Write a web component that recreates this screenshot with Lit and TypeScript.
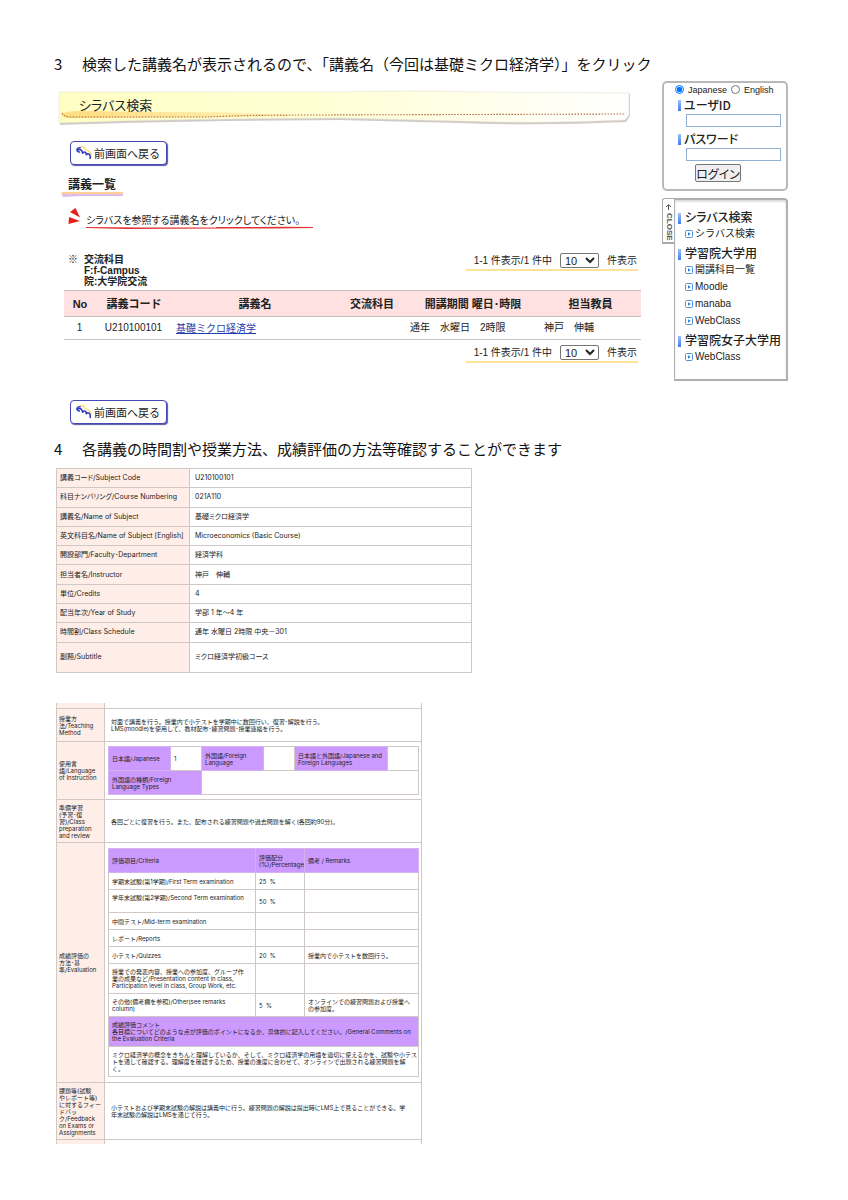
import { LitElement, html, css, nothing } from "lit";
import { customElement, property } from "lit/decorators.js";

const lines = (text: string) =>
  text.split("\n").map((part, i) => (i ? html`<br />${part}` : part));

@customElement("back-button")
class BackButton extends LitElement {
  static styles = css`
    :host { display: block; }
    button {
      display: flex; align-items: center; gap: 2px;
      height: 24px; padding: 0 6px 0 5px; box-sizing: border-box;
      border: 1px solid #4647b5; border-radius: 4px; background: #fff;
      box-shadow: 1px 1px 1px #5556a8;
      font: 11px/16px "Noto Sans CJK JP", sans-serif; color: #222; white-space: nowrap;
    }
    svg { display: block; width: 16px; height: 16px; }
  `;
  render() {
    return html`<button type="button">
      <svg viewBox="0 0 16 16" fill="none" stroke-linecap="round" stroke-linejoin="round">
        <path d="M3 2.500C5 .800 7.500 1.500 8.500 3.500S11 5 12.500 6S15.300 8 15 10" stroke="#ffdf80" stroke-width="1.600"></path>
        <path d="M4.200 2.800C2.500 2.800 1 3.800 1 5C1 6.200 2.300 6.800 3.400 7" stroke="#2f45c8" stroke-width="1.600"></path>
        <path d="M1.300 5C3.500 3.800 6.300 4.300 6.600 8.300C7.800 6.300 10 6.300 10.400 9.800C11.800 7.800 14.800 8.500 14.200 13.500" stroke="#2f35c0" stroke-width="1.500"></path>
      </svg>
      前画面へ戻る
    </button>`;
  }
}

@customElement("pager-bar")
class PagerBar extends LitElement {
  static styles = css`
    :host { display: block; }
    .bar {
      display: flex; align-items: center; justify-content: flex-end; gap: 8px;
      width: 172px; height: 19px; padding: 0 1px 0 0; box-sizing: border-box;
      border-bottom: 2px solid #ffe299;
      font: 10px/14px "Liberation Sans", "Noto Sans CJK JP", sans-serif; color: #222; white-space: nowrap;
    }
    select {
      width: 39px; height: 15px; padding: 0; margin: 0;
      border: 1px solid #767676; border-radius: 2px; background: #fff;
      font: 11px/13px "Liberation Sans", sans-serif; color: #222;
    }
  `;
  render() {
    return html`<div class="bar">
      <span>1-1 件表示/1 件中</span>
      <select aria-label="件表示"><option>10</option></select>
      <span>件表示</span>
    </div>`;
  }
}

@customElement("lecture-list")
class LectureList extends LitElement {
  static styles = css`
    :host { display: block; font: 10px/14px "Liberation Sans", "Noto Sans CJK JP", sans-serif; color: #222; }
    .banner { display: grid; margin: 8px 10px 0 4px; height: 37px; }
    .banner > * { grid-area: 1 / 1; }
    .banner svg { width: 100%; height: 37px; display: block; }
    .banner h2 {
      margin: 0; padding: 7px 0 0 21px; align-self: start;
      font: 13px/18px "Noto Sans CJK JP", sans-serif; font-feature-settings: "palt"; color: #222;
    }
    .inner { padding-left: 10px; }
    .back { display: flex; margin: 15px 0 0 6px; }
    .title {
      display: inline-block; margin: 10px 0 0 -3px; padding: 0 7px; height: 18px;
      font: bold 12px/18px "Noto Sans CJK JP", sans-serif;
    }
    .stroke { display: block; width: 62px; height: 6px; margin: -2px 0 0 -3px; }
    .note { display: flex; margin: 11px 0 0 4px; gap: 4px; align-items: flex-start; }
    .note > svg { width: 14px; height: 18px; }
    .note p { margin: 0; padding-top: 5px; font: 10px/13px "Noto Sans CJK JP", sans-serif; font-feature-settings: "palt"; }
    .note p svg { display: block; width: 228px; height: 4px; }
    .info { display: flex; justify-content: space-between; align-items: flex-start; margin: 22px 3px 0 4px; }
    .legend { display: flex; gap: 6px; padding-top: 2px; font: bold 10px/11px "Liberation Sans", "Noto Sans CJK JP", sans-serif; }
    table { width: 100%; border-collapse: collapse; table-layout: fixed; }
    .list { margin-top: 3px; }
    th { height: 25px; padding: 0; background: #ffe1e1; border: solid #c9bcbc; border-width: 1px 0; font: bold 11px/14px "Liberation Sans", "Noto Sans CJK JP", sans-serif; white-space: nowrap; }
    td { height: 22px; padding: 0 5px 0 4px; border-bottom: 1px solid #c9c4c4; white-space: nowrap; }
    .no { width: 32px; text-align: center; }
    .code { width: 76px; text-align: center; }
    .name { width: 166px; }
    .exchange { width: 68px; }
    .term { width: 134px; }
    a { color: #1f3fae; font: 10px/14px "Noto Sans CJK JP", sans-serif; }
    .bottom { display: flex; justify-content: flex-end; margin: 4px 3px 0 0; }
    .last { margin-top: 37px; }
  `;
  render() {
    return html`
      <div class="banner">
        <svg viewBox="0 0 572 37" preserveAspectRatio="none" aria-hidden="true">
          <defs>
            <linearGradient id="paper"><stop offset="0" stop-color="#ffffc4"></stop><stop offset=".45" stop-color="#ffffd4"></stop><stop offset="1" stop-color="#fff"></stop></linearGradient>
            <linearGradient id="brush"><stop offset="0" stop-color="#ffdd80"></stop><stop offset="1" stop-color="#fff4bc"></stop></linearGradient>
          </defs>
          <path d="M1 4L280 4Q345 0 420 4L571 5V27L567 33Q480 37 400 34L280 31Q100 32 2 36Z" fill="#cfcac6"></path>
          <path d="M1 3L280 3Q345 1 420 3L570 4V26L566 31Q480 35 400 32L280 29Q100 30 1 34Z" fill="url(#paper)" stroke="#e6e2d4" stroke-width=".6"></path>
          <path d="M4 25Q10 21 40 22T130 23T240 27Q100 29 10 29Q3 28 4 25Z" fill="url(#brush)"></path>
          <path d="M4 24Q6 28 12 28H150Q190 26 250 26L566 25" fill="none" stroke="#b0683c" stroke-width="1.100" stroke-dasharray="1.500 1.500"></path>
        </svg>
        <h2>シラバス検索</h2>
      </div>
      <div class="inner">
        <div class="back"><back-button></back-button></div>
        <h3 class="title">講義一覧</h3>
        <svg class="stroke" viewBox="0 0 62 6" preserveAspectRatio="none" aria-hidden="true">
          <path d="M0 2L62 1V5L20 5L2 6Z" fill="#dfbdea"></path>
          <path d="M1 1H62V3L1 3Z" fill="#ffcf96"></path>
        </svg>
        <div class="note">
          <svg viewBox="0 0 14 18" fill="#e8201c" aria-hidden="true">
            <path d="M2 4L7.500 0L12 9.500Z"></path>
            <path d="M1 9L12 13L.500 16Z"></path>
          </svg>
          <p>シラバスを参照する講義名をクリックしてください。
            <svg viewBox="0 0 228 4" aria-hidden="true"><path d="M0 1L60 1.500H128L129 2L130 1L200 .800L227 1V2L190 2.500L140 2.500L40 3L0 2Z" fill="#e03434"></path></svg>
          </p>
        </div>
        <div class="info">
          <div class="legend"><span>※</span><span>交流科目<br />F:f-Campus<br />院:大学院交流</span></div>
          <pager-bar></pager-bar>
        </div>
        <table class="list">
          <thead>
            <tr>
              <th class="no">No</th><th class="code">講義コード</th><th class="name">講義名</th>
              <th class="exchange">交流科目</th><th class="term">開講期間 曜日･時限</th><th>担当教員</th>
            </tr>
          </thead>
          <tbody>
            <tr>
              <td class="no">1</td><td class="code">U210100101</td>
              <td><a href="#subject">基礎ミクロ経済学</a></td><td></td>
              <td>通年　水曜日　2時限</td><td>神戸　伸輔</td>
            </tr>
          </tbody>
        </table>
        <div class="bottom"><pager-bar></pager-bar></div>
        <div class="back last"><back-button></back-button></div>
      </div>
    `;
  }
}

const MENU = [
  { title: "シラバス検索", items: ["シラバス検索"] },
  { title: "学習院大学用", items: ["開講科目一覧", "Moodle", "manaba", "WebClass"] },
  { title: "学習院女子大学用", items: ["WebClass"] },
];

@customElement("side-bar")
class SideBar extends LitElement {
  static styles = css`
    :host { display: block; width: 126px; color: #222; font: 10px/14px "Liberation Sans", "Noto Sans CJK JP", sans-serif; }
    form {
      height: 110px; box-sizing: border-box; padding: 0 6px 0 11px;
      border: 2px solid #b8b8b8; border-radius: 5px; background: #fff;
    }
    .lang { display: flex; gap: 4px; height: 13px; align-items: center; }
    .lang label { display: flex; align-items: center; gap: 4px; font-size: 9px; }
    input[type="radio"] { width: 9px; height: 9px; margin: 0; }
    .field, h3 {
      display: block; margin: 0; padding-left: 8px; white-space: nowrap;
      font: 500 12px/16px "Noto Sans CJK JP", sans-serif; font-feature-settings: "palt";
      background: linear-gradient(to bottom, #9cc0ff, #3f7ce8) 3px 4px / 3px 11px no-repeat;
    }
    .field { padding: 1px 0 0 9px; }
    .box {
      display: block; width: 95px; height: 13px; box-sizing: border-box; margin: 1px 0 3px 11px;
      border: 1px solid #8fb0d2; padding: 0 2px; background: #fff; font-size: 10px;
    }
    .login {
      display: block; width: 46px; height: 18px; margin: 3px 0 0 20px; padding: 0;
      border: 1px solid #777; border-radius: 2px; background: #efefef; color: #222;
      font: 12px/15px "Noto Sans CJK JP", sans-serif; font-feature-settings: "palt"; white-space: nowrap;
    }
    .panel { display: flex; align-items: flex-start; margin-top: 7px; }
    .tab {
      display: flex; flex-direction: column; align-items: center; gap: 3px;
      width: 12px; height: 46px; box-sizing: border-box; padding: 5px 0 0;
      border: 1px solid #aaa; border-right: 0; border-bottom-width: 2px; border-radius: 3px 0 0 0; background: #fff;
      color: #555; font: bold 8px/10px "Liberation Sans", sans-serif;
    }
    .tab svg { width: 7px; height: 6px; }
    .tab span { writing-mode: vertical-rl; }
    nav {
      flex: 1; min-width: 0; height: 183px; box-sizing: border-box; padding: 9px 0 0 2px;
      border: solid #b0b0b0; border-width: 2px 2px 2px 1px; border-radius: 0 4px 0 0;
      box-shadow: inset 0 2px 2px #ddd;
    }
    ul { list-style: none; margin: 0; padding: 0; }
    ul + h3 { margin-top: 3px; }
    h3 { background-position: 1px 4px; }
    li { display: flex; height: 17px; align-items: center; padding-left: 8px; }
    li a { display: flex; align-items: center; gap: 2px; color: #222; text-decoration: none; font: 10px/16px "Liberation Sans", "Noto Sans CJK JP", sans-serif; white-space: nowrap; }
    li svg { width: 8px; height: 8px; }
  `;
  render() {
    return html`
      <form>
        <div class="lang">
          <label><input type="radio" name="lang" checked />Japanese</label>
          <label><input type="radio" name="lang" />English</label>
        </div>
        <label class="field" for="user">ユーザID</label>
        <input class="box" id="user" type="text" />
        <label class="field" for="pass">パスワード</label>
        <input class="box" id="pass" type="password" />
        <button class="login" type="button">ログイン</button>
      </form>
      <div class="panel">
        <button class="tab" type="button">
          <svg viewBox="0 0 7 6" fill="none" stroke="#555"><path d="M3.500 6V1M1 3L3.500 .700L6 3"></path></svg>
          <span>CLOSE</span>
        </button>
        <nav>
          ${MENU.map((group) => html`<h3>${group.title}</h3>
            <ul>
              ${group.items.map((item) => html`<li><a href="#menu">
                <svg viewBox="0 0 8 8"><rect x=".5" y=".5" width="7" height="7" rx="1" fill="#fff" stroke="#4c94dc"></rect><path d="M3 2.200L5.800 4L3 5.800Z" fill="#2f7fd2"></path></svg>${item}</a></li>`)}
            </ul>`)}
        </nav>
      </div>
    `;
  }
}

const SUBJECT = [
  ["講義コード/Subject Code", "U210100101"],
  ["科目ナンバリング/Course Numbering", "021A110"],
  ["講義名/Name of Subject", "基礎ミクロ経済学"],
  ["英文科目名/Name of Subject [English]", "Microeconomics (Basic Course)"],
  ["開設部門/Faculty･Department", "経済学科"],
  ["担当者名/Instructor", "神戸　伸輔"],
  ["単位/Credits", "4"],
  ["配当年次/Year of Study", "学部 1 年～4 年"],
  ["時間割/Class Schedule", "通年 水曜日 2時限 中央－301"],
  ["副題/Subtitle", "ミクロ経済学初級コース"],
];

const CRITERIA = [
  ["学期末試験(第1学期)/First Term examination", "25  %", "", "short"],
  ["学年末試験(第2学期)/Second Term examination\n ", "50  %", "", "tall"],
  ["中間テスト/Mid-term examination", "", "", "short"],
  ["レポート/Reports", "", "", "short"],
  ["小テスト/Quizzes", "20  %", "授業内で小テストを数回行う。", "short"],
  ["授業での発表内容、授業への参加度、グループ作\n業の成果など/Presentation content in class,\nParticipation level in class, Group Work, etc.", "", "", "triple"],
  ["その他(備考欄を参照)/Other(see remarks\ncolumn)", "5  %", "オンラインでの練習問題および授業へ\nの参加度。", "tall"],
];

@customElement("syllabus-detail")
class SyllabusDetail extends LitElement {
  static styles = css`
    :host {
      display: block; color: #222; padding-left: 2px;
      font: 7px/8px Inter, "Noto Sans CJK JP", sans-serif;
    }
    table { border-collapse: collapse; table-layout: fixed; }
    th, td { padding: 0 0 0 3px; text-align: left; font-weight: normal; white-space: pre; vertical-align: middle; border: 1px solid #cfc8c4; }
    .subject { width: 416px; height: 205px; border: 1px solid #a39b97; }
    .subject tr { height: 19px; }
    .subject tr:last-child { height: 30px; }
    .subject th { width: 129px; background: #ffeee8; font-feature-settings: "palt"; }
    .subject td { padding-left: 5px; font-feature-settings: "palt"; }
    .detail { width: 366px; margin-top: 30px; border: solid #a39b97; border-width: 0 1px; font-size: 6px; line-height: 7px; }
    .detail > tbody > tr > th { width: 45px; padding-left: 2px; background: #ffeee8; }
    .detail > tbody > tr > td { padding-left: 6px; }
    .detail > tbody > tr > td.nest { padding: 0 0 0 3px; white-space: normal; }
    .detail > tbody > .edge > * { height: 5px; border-top: 0; }
    .detail > tbody > .edge.end > * { height: 4px; border-top: 1px solid #cfc8c4; border-bottom: 0; }
    .method > * { height: 32px; }
    .language > * { height: 57px; }
    .review > * { height: 42px; }
    .evaluation > * { height: 239px; }
    .feedback > * { height: 56px; }
    .nested { width: 311px; }
    .nested th { background: #cc99ff; }
    .half > * { height: 23px; }
    .half > th, .head > th { border-color: #d3b2ee; }
    .head > * { height: 23px; }
    .short > * { height: 16px; }
    .tall > * { height: 22px; }
    .triple > * { height: 29px; }
    .label { width: 62px; }
    .blank { width: 31px; }
    .wide { width: 93px; }
    .criteria { width: 143px; }
    .percent { width: 45px; }
  `;
  render() {
    return html`
      <table class="subject" id="subject">
        <tbody>
          ${SUBJECT.map(([label, value]) => html`<tr><th scope="row">${label}</th><td>${value}</td></tr>`)}
        </tbody>
      </table>
      <table class="detail">
        <tbody>
          <tr class="edge"><th></th><td></td></tr>
          <tr class="method">
            <th scope="row">${lines("授業方\n法/Teaching\nMethod")}</th>
            <td>${lines("対面で講義を行う。授業内で小テストを学期中に数回行い、復習･解説を行う。\nLMS(moodle)を使用して、教材配布･練習問題･授業連絡を行う。")}</td>
          </tr>
          <tr class="language">
            <th scope="row">${lines("使用言\n語/Language\nof Instruction")}</th>
            <td class="nest">
              <table class="nested">
                <colgroup><col class="label" /><col class="blank" /><col class="label" /><col class="blank" /><col class="wide" /><col /></colgroup>
                <tbody>
                  <tr class="half">
                    <th>日本語/Japanese</th><td>1</td>
                    <th>${lines("外国語/Foreign\nLanguage")}</th><td></td>
                    <th>${lines("日本語と外国語/Japanese and\nForeign Languages")}</th><td></td>
                  </tr>
                  <tr class="half">
                    <th colspan="2">${lines("外国語の種類/Foreign\nLanguage Types")}</th><td colspan="4"></td>
                  </tr>
                </tbody>
              </table>
            </td>
          </tr>
          <tr class="review">
            <th scope="row">${lines("準備学習\n(予習･復\n習)/Class\npreparation\nand review")}</th>
            <td>各回ごとに復習を行う。また、配布される練習問題や過去問題を解く(各回約90分)。</td>
          </tr>
          <tr class="evaluation">
            <th scope="row">${lines("成績評価の\n方法･基\n準/Evaluation")}</th>
            <td class="nest">
              <table class="nested">
                <thead>
                  <tr class="head">
                    <th class="criteria">評価項目/Criteria</th>
                    <th class="percent">${lines("評価配分\n(%)/Percentage")}</th>
                    <th>備考 / Remarks</th>
                  </tr>
                </thead>
                <tbody>
                  ${CRITERIA.map(([name, share, note, size]) => html`<tr class=${size}><td>${lines(name)}</td><td>${share}</td><td>${note ? lines(note) : nothing}</td></tr>`)}
                  <tr class="triple"><th colspan="3">${lines("成績評価コメント\n各目標についてどのような点が評価のポイントになるか、具体的に記入してください。/General Comments on\nthe Evaluation Criteria")}</th></tr>
                  <tr class="triple"><td colspan="3">${lines("ミクロ経済学の概念をきちんと理解しているか、そして、ミクロ経済学の用語を適切に使えるかを、試験や小テス\nトを通して確認する。理解度を確認するため、授業の進度に合わせて、オンラインで出題される練習問題を解\nく。")}</td></tr>
                </tbody>
              </table>
            </td>
          </tr>
          <tr class="feedback">
            <th scope="row">${lines("課題等(試験\nやレポート等)\nに対するフィー\nドバッ\nク/Feedback\non Exams or\nAssignments")}</th>
            <td>${lines("小テストおよび学期末試験の解説は講義中に行う。練習問題の解説は提出時にLMS上で見ることができる。学\n年末試験の解説はLMSを通じて行う。")}</td>
          </tr>
          <tr class="edge end"><th></th><td></td></tr>
        </tbody>
      </table>
    `;
  }
}

@customElement("step-heading")
class StepHeading extends LitElement {
  @property({ type: Number }) number = 1;
  static styles = css`
    :host { display: block; }
    h1 { display: flex; gap: 18px; margin: 0; color: #111; font: 15px/20px "Noto Sans CJK JP", sans-serif; white-space: nowrap; }
    span { width: 10px; }
  `;
  render() {
    return html`<h1><span>${this.number}</span><slot></slot></h1>`;
  }
}

@customElement("app-root")
class AppRoot extends LitElement {
  static styles = css`
    :host { display: block; background: #fff; padding: 54px 60px 56px 54px; min-width: 734px; box-sizing: border-box; }
    .step { display: flex; align-items: flex-start; gap: 21px; margin: 7px 0 15px; }
    lecture-list { flex: 1; min-width: 0; }
    syllabus-detail { margin-top: 9px; }
  `;
  render() {
    return html`
      <step-heading number="3">検索した講義名が表示されるので、「講義名（今回は基礎ミクロ経済学）」をクリック</step-heading>
      <div class="step">
        <lecture-list></lecture-list>
        <side-bar></side-bar>
      </div>
      <step-heading number="4">各講義の時間割や授業方法、成績評価の方法等確認することができます</step-heading>
      <syllabus-detail></syllabus-detail>
    `;
  }
}
